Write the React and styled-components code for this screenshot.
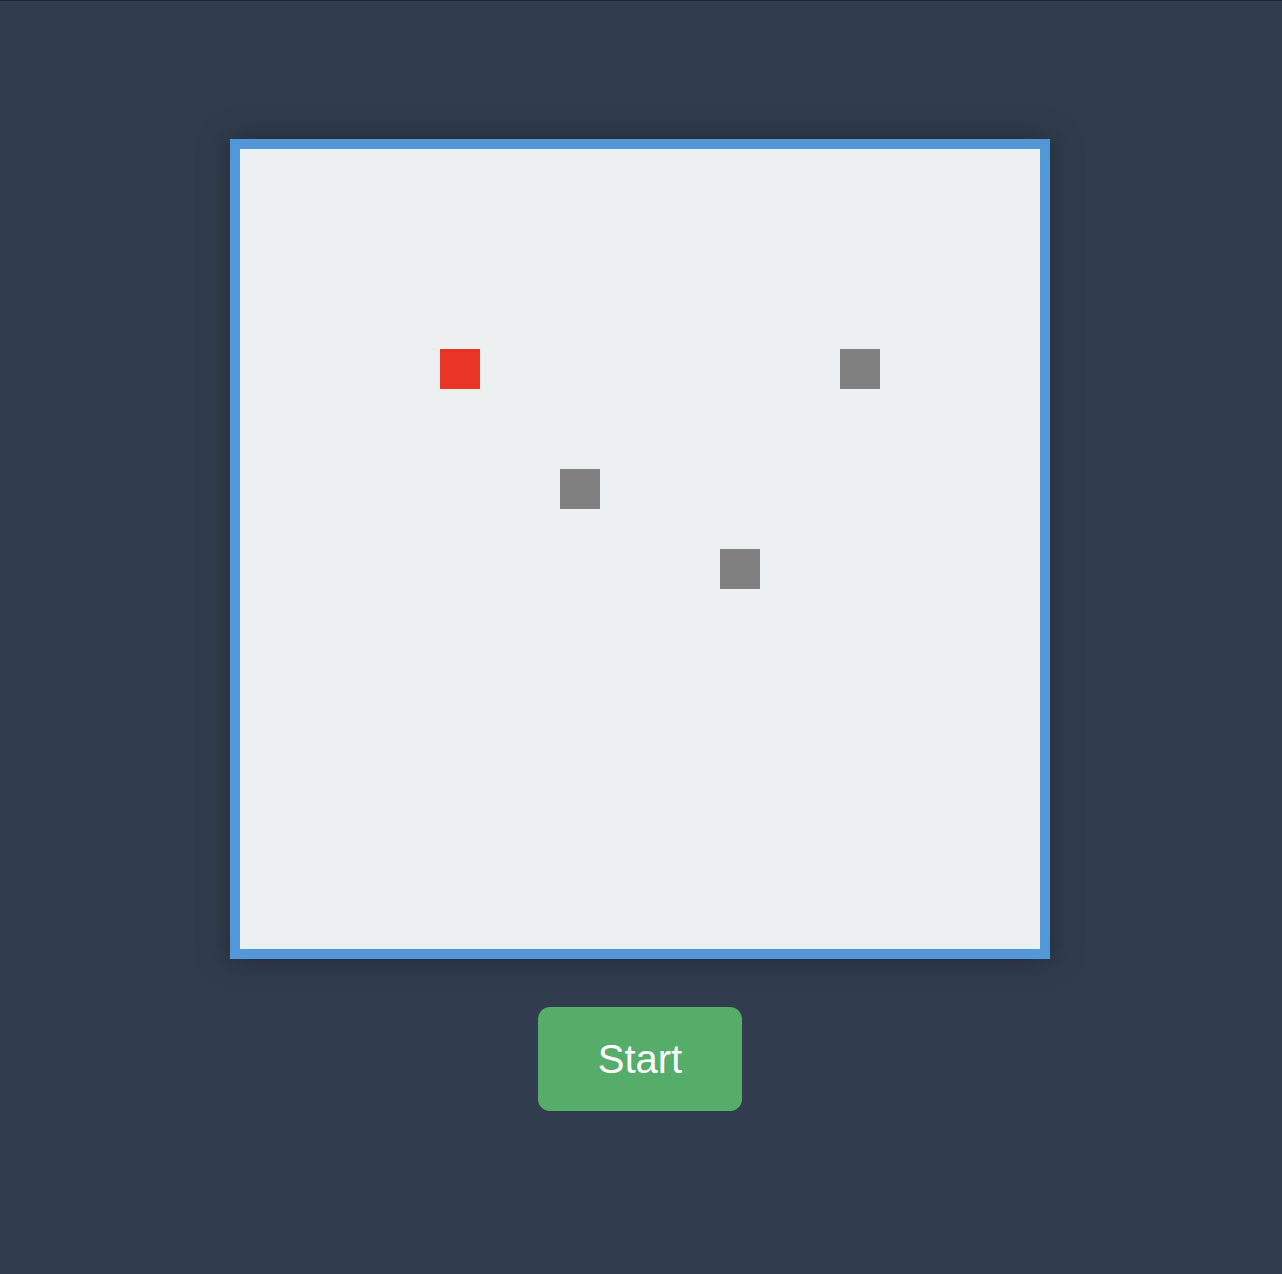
import React from "react";
import styled, { createGlobalStyle } from "styled-components";

const Global = createGlobalStyle`
  html, body { margin: 0; padding: 0; background: #313d4e; }
  body { font-family: "Liberation Sans", Arial, sans-serif; }
`;

const Page = styled.div`
  min-height: 1274px;
  box-sizing: border-box;
  border-top: 1px solid #23272e;
  background: #313d4e;
  display: flex;
  flex-direction: column;
  align-items: center;
  padding: 138px 2px 0 0;
  gap: 48px;
`;

const Board = styled.div`
  position: relative;
  width: 800px;
  height: 800px;
  background: #ecf0f1;
  border: 10px solid #5298d8;
  box-shadow: 0 0 30px rgba(0, 0, 0, 0.35);
`;

const Cell = styled.div`
  position: absolute;
  width: 40px;
  height: 40px;
  background: ${(p) => (p.$kind === "food" ? "#e93323" : "#808080")};
`;

const StartButton = styled.button`
  width: 204px;
  height: 104px;
  border: none;
  border-radius: 12px;
  background: #55ad69;
  color: #ffffff;
  font-family: "Liberation Sans", Arial, sans-serif;
  font-size: 40px;
  cursor: pointer;
`;

const cells = [
  { x: 5, y: 5, kind: "food" },
  { x: 15, y: 5, kind: "block" },
  { x: 8, y: 8, kind: "block" },
  { x: 12, y: 10, kind: "block" },
];

export default function App() {
  return (
    <>
      <Global />
      <Page>
        <Board>
          {cells.map((c, i) => (
            <Cell key={i} $kind={c.kind} style={{ left: c.x * 40, top: c.y * 40 }} />
          ))}
        </Board>
        <StartButton>Start</StartButton>
      </Page>
    </>
  );
}
